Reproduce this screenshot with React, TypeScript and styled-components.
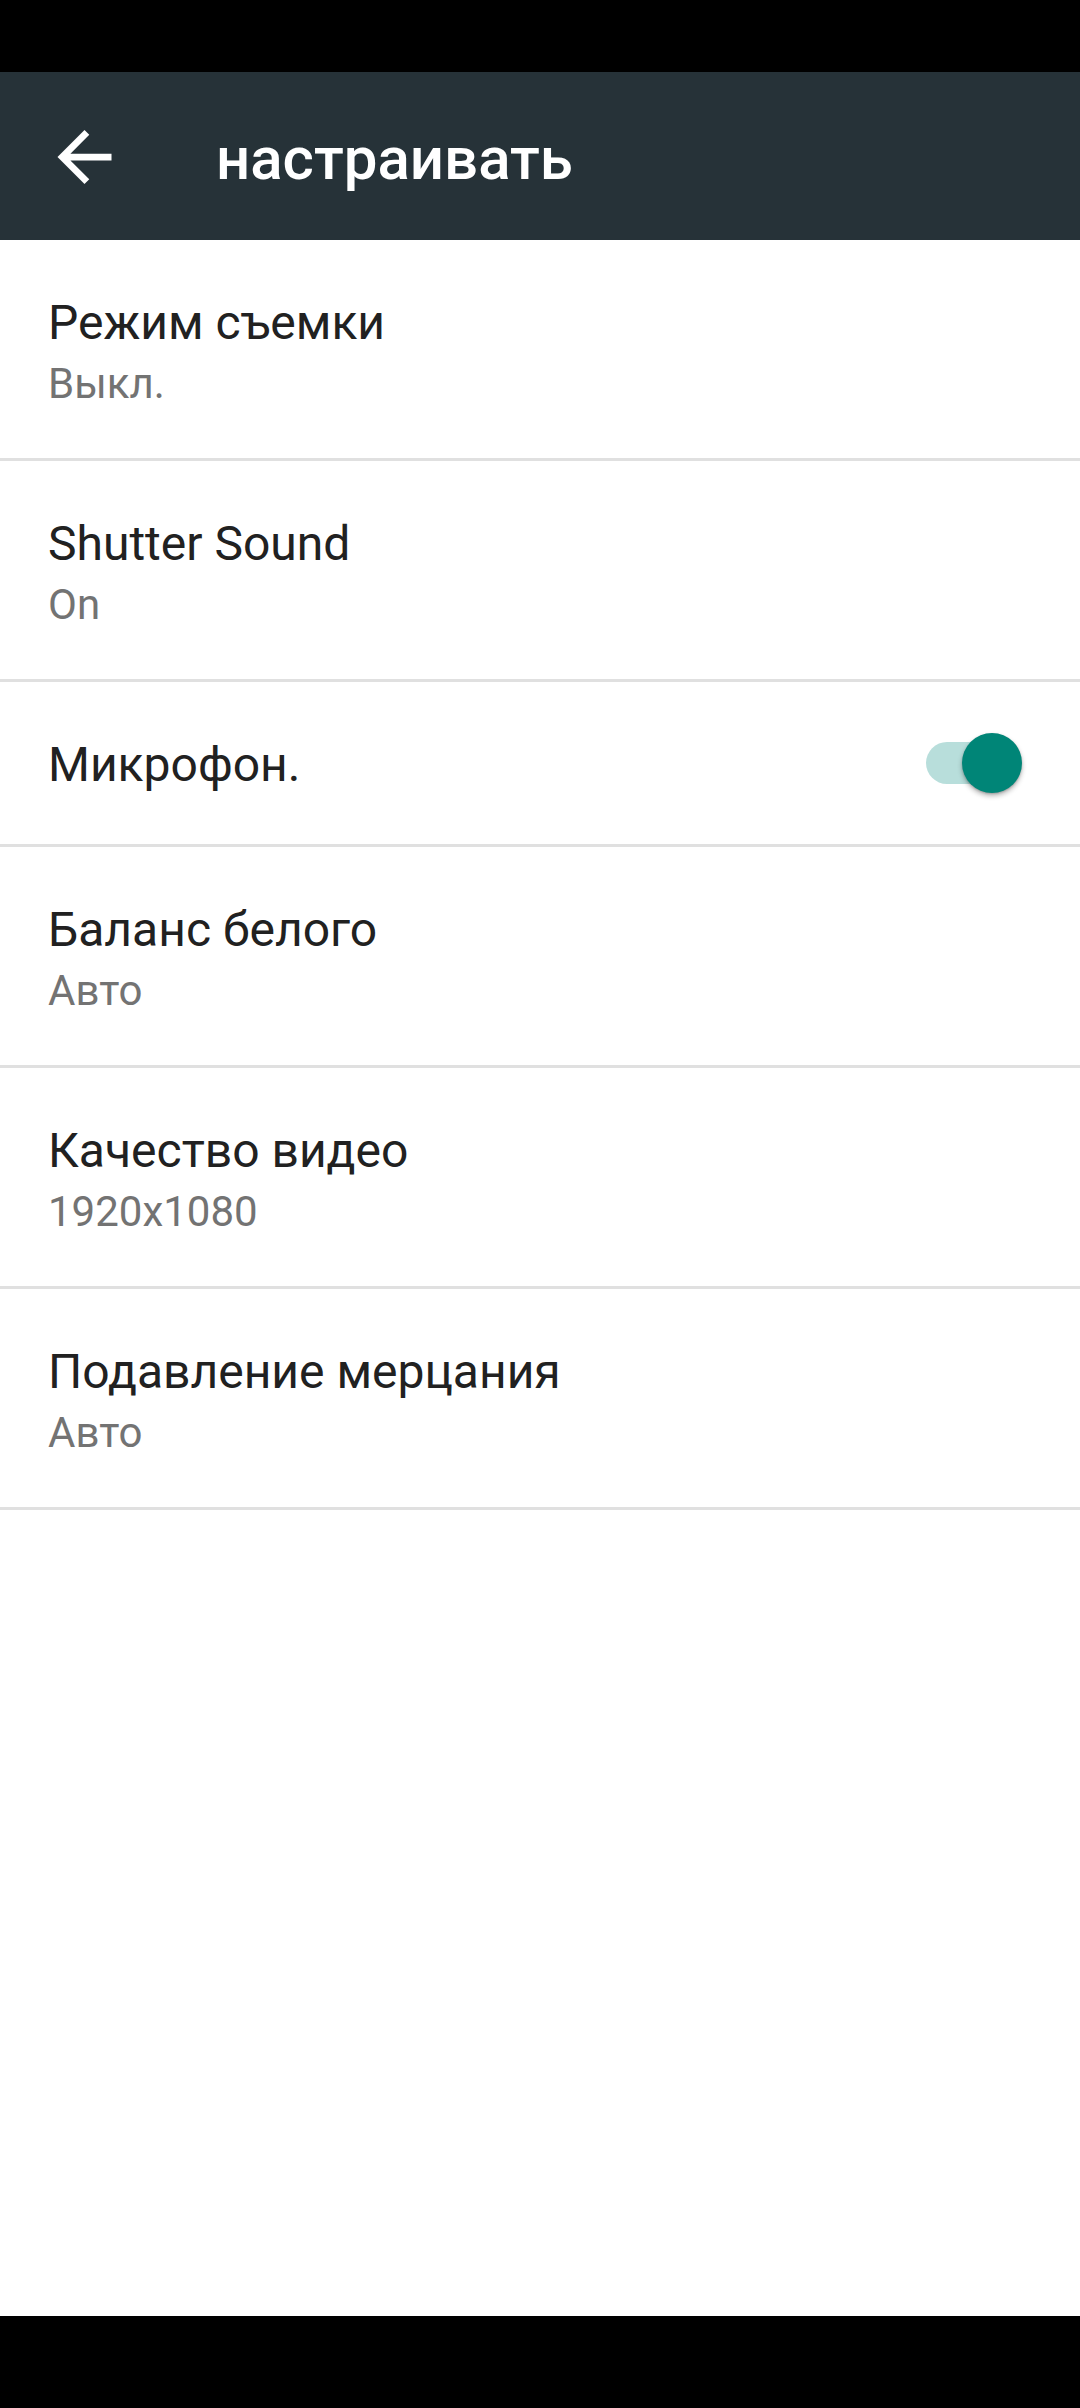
import React from 'react';
import styled, { createGlobalStyle } from 'styled-components';

type Pref = {
  title: string;
  summary?: string;
  toggle?: boolean;
};

const PREFS: Array<Pref> = [
  { title: 'Режим съемки', summary: 'Выкл.' },
  { title: 'Shutter Sound', summary: 'On' },
  { title: 'Микрофон.', toggle: true },
  { title: 'Баланс белого', summary: 'Авто' },
  { title: 'Качество видео', summary: '1920x1080' },
  { title: 'Подавление мерцания', summary: 'Авто' },
];

const GlobalStyle = createGlobalStyle`
  * {
    box-sizing: border-box;
  }
  html, body {
    margin: 0;
    padding: 0;
    background: #ffffff;
  }
  body {
    font-family: Roboto, "Noto Sans", "Liberation Sans", sans-serif;
  }
`;

const Screen = styled.div`
  width: 1080px;
  height: 2408px;
  display: flex;
  flex-direction: column;
  background: #ffffff;
  overflow: hidden;
`;

const StatusBar = styled.div`
  height: 72px;
  flex: none;
  background: #000000;
`;

const Toolbar = styled.header`
  height: 168px;
  flex: none;
  display: flex;
  align-items: center;
  background: #263238;
  color: #ffffff;
`;

const BackButton = styled.div`
  width: 216px;
  height: 168px;
  display: flex;
  align-items: center;
  padding-left: 57px;
  padding-top: 1px;
`;

const Title = styled.h1`
  margin: 0;
  padding-top: 5px;
  font-family: Roboto, "Noto Sans", sans-serif;
  font-weight: 500;
  font-size: 60px;
  letter-spacing: 0;
`;

const List = styled.div`
  display: flex;
  flex-direction: column;
`;

const Row = styled.div<{ $single?: boolean }>`
  height: ${({ $single }) => ($single ? '165px' : '221px')};
  display: flex;
  align-items: ${({ $single }) => ($single ? 'center' : 'flex-start')};
  justify-content: space-between;
  padding: ${({ $single }) => ($single ? '4px 58px 0 48px' : '55px 48px 0 48px')};
  border-bottom: 3px solid #e0e0e0;
`;

const TextBlock = styled.div`
  display: flex;
  flex-direction: column;
`;

const PrefTitle = styled.div`
  font-size: 48px;
  line-height: 56px;
  color: #212121;
`;

const PrefSummary = styled.div`
  margin-top: 8px;
  font-size: 42px;
  line-height: 50px;
  color: #737373;
`;

const Switch = styled.div`
  position: relative;
  width: 96px;
  height: 60px;
  margin-top: -4px;
`;

const Track = styled.div`
  position: absolute;
  left: 0;
  top: 9px;
  width: 84px;
  height: 42px;
  border-radius: 21px;
  background: #b8dedb;
`;

const Thumb = styled.div`
  position: absolute;
  right: 0;
  top: 0;
  width: 60px;
  height: 60px;
  border-radius: 50%;
  background: #008577;
  box-shadow: 0 3px 5px rgba(0, 0, 0, 0.28), 0 1px 2px rgba(0, 0, 0, 0.18);
`;

const Filler = styled.div`
  flex: 1;
`;

const NavBar = styled.div`
  height: 92px;
  flex: none;
  background: #000000;
`;

const BackArrow = () => (
  <svg width="55" height="54" viewBox="4 4 16 16" fill="#ffffff">
    <path d="M20 11H7.83l5.59-5.59L12 4l-8 8 8 8 1.41-1.41L7.83 13H20v-2z" />
  </svg>
);

const App: React.FC = () => (
  <Screen>
    <GlobalStyle />
    <StatusBar />
    <Toolbar>
      <BackButton>
        <BackArrow />
      </BackButton>
      <Title>настраивать</Title>
    </Toolbar>
    <List>
      {PREFS.map(pref => (
        <Row key={pref.title} $single={!pref.summary}>
          <TextBlock>
            <PrefTitle>{pref.title}</PrefTitle>
            {pref.summary && <PrefSummary>{pref.summary}</PrefSummary>}
          </TextBlock>
          {pref.toggle && (
            <Switch>
              <Track />
              <Thumb />
            </Switch>
          )}
        </Row>
      ))}
    </List>
    <Filler />
    <NavBar />
  </Screen>
);

export default App;
